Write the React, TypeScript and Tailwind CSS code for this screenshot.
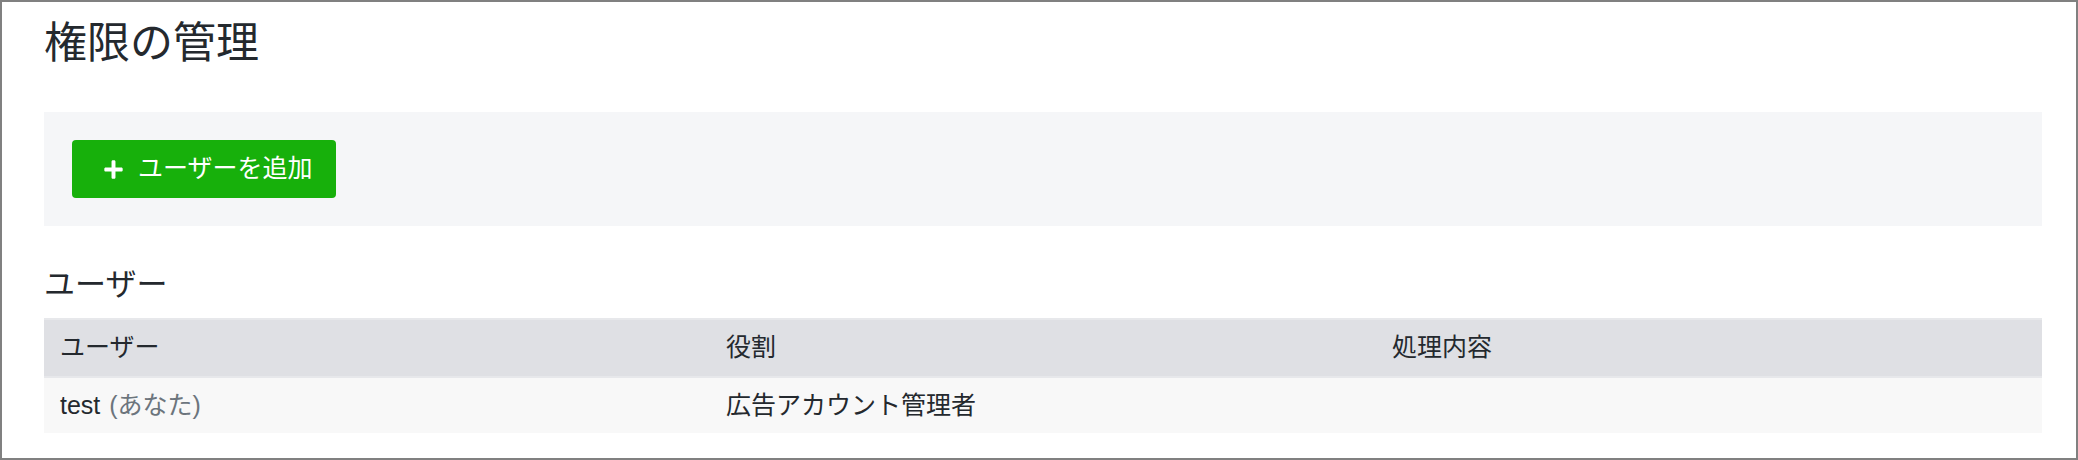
import { FaPlus } from "react-icons/fa";

const font = "font-['Liberation_Sans','Noto_Sans_CJK_JP',sans-serif]";

const users = [{ name: "test", self: true, role: "広告アカウント管理者", action: "" }];

const App = () => {
  return (
    <div
      className={`${font} w-[2078px] h-[460px] border-2 border-[#808080] bg-white text-[#24292e] pl-[42px] pr-[34px]`}
    >
      <h1 className="h-[58px] mt-[12px] flex items-center text-[43px] font-normal">
        権限の管理
      </h1>

      <div className="mt-[40px] h-[114px] bg-[#f5f6f8] px-[28px] flex items-center">
        <button
          type="button"
          className="h-[58px] w-[264px] rounded-[4px] bg-[#17b00b] text-white flex items-center pl-[31px] gap-[14px] text-[25px]"
        >
          <FaPlus size={21} />
          <span>ユーザーを追加</span>
        </button>
      </div>

      <h2 className="mt-[36px] h-[46px] flex items-center text-[31px] font-normal">
        ユーザー
      </h2>

      <div className="mt-[10px] text-[25px]">
        <div className="grid grid-cols-3 h-[60px] bg-[#dfe0e4] border-y-2 border-[#e7e8eb]">
          <div className="flex items-center px-[16px]">ユーザー</div>
          <div className="flex items-center px-[16px]">役割</div>
          <div className="flex items-center px-[16px]">処理内容</div>
        </div>
        {users.map((u) => (
          <div key={u.name} className="grid grid-cols-3 h-[55px] bg-[#f8f8f8]">
            <div className="flex items-center px-[16px]">
              {u.name}
              {u.self && <span className="ml-[9px] text-[#6c757d]">(あなた)</span>}
            </div>
            <div className="flex items-center px-[16px]">{u.role}</div>
            <div className="flex items-center px-[16px]">{u.action}</div>
          </div>
        ))}
      </div>
    </div>
  );
};

export default App;
